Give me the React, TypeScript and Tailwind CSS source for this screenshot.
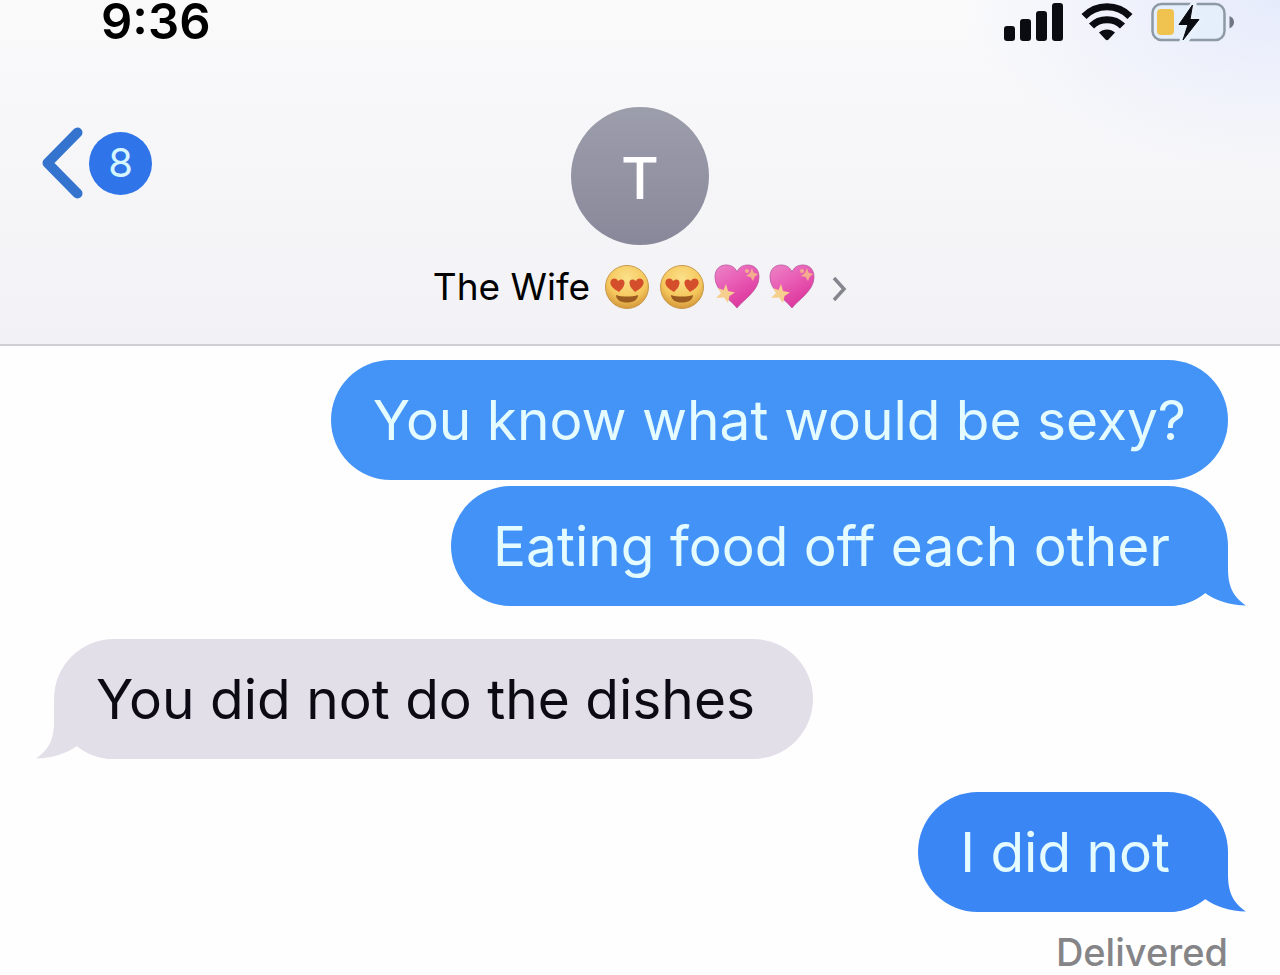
import { useId } from 'react'
import { clsx } from 'clsx'

type Message = {
  text: string
  from: 'me' | 'them'
  tail?: boolean
  bubble: string
  fill?: string
  gap: string
}

const messages: Message[] = [
  { text: 'You know what would be sexy?', from: 'me', bubble: 'bg-[#4493f6] text-[#e4fbff]', gap: 'mt-3.5' },
  { text: 'Eating food off each other', from: 'me', tail: true, bubble: 'bg-[#4292f7] text-[#e4fbff]', fill: 'fill-[#4292f7]', gap: 'mt-1.5' },
  { text: 'You did not do the dishes', from: 'them', tail: true, bubble: 'bg-[#e3dfe9] text-[#0c0b14]', fill: 'fill-[#e3dfe9]', gap: 'mt-[33px]' },
  { text: 'I did not', from: 'me', tail: true, bubble: 'bg-[#3b86f5] text-[#e4fbff]', fill: 'fill-[#3b86f5]', gap: 'mt-[33px]' },
]

function Signal() {
  return (
    <svg width="59" height="40" viewBox="0 0 59 40" fill="#0b0b12" aria-hidden="true">
      <rect x="0" y="24" width="11" height="15" rx="3" />
      <rect x="16" y="17" width="11" height="22" rx="3" />
      <rect x="32" y="9" width="11" height="30" rx="3" />
      <rect x="48" y="1" width="11" height="38" rx="3" />
    </svg>
  )
}

function Wifi() {
  return (
    <svg width="52" height="40" viewBox="0 0 52 40" aria-hidden="true">
      <g fill="none" stroke="#0b0b12" strokeWidth="7">
        <path d="M3 14.500C15.500 1.500 36.500 1.500 49 14.500" />
        <path d="M10.500 24C18.500 15.500 33.500 15.500 41.500 24" />
      </g>
      <path d="M18 30.500C22.500 26.500 29.500 26.500 34 30.500L27.500 37.500Q26 39 24.500 37.500Z" fill="#0b0b12" />
    </svg>
  )
}

function Battery() {
  return (
    <svg width="84" height="42" viewBox="0 0 84 42" aria-hidden="true">
      <rect x="1.500" y="3" width="72" height="36" rx="9" fill="#e4effb" stroke="#8d99a5" strokeWidth="2.500" />
      <rect x="6" y="8" width="17" height="26" rx="4" fill="#f0c350" />
      <path d="M41 0L24 24H32L28 42H37L53 16H44L46 0Z" fill="#e8f1fb" />
      <path d="M41.500 4L28 23.500H37L32 39L48 18.500H39Z" fill="#0b0b12" stroke="#0b0b12" strokeLinejoin="round" />
      <path d="M78.500 15Q83 17 83 21T78.500 27.500Z" fill="#6e7681" />
    </svg>
  )
}

function HeartEyes() {
  const id = useId()
  return (
    <svg width="46" height="46" viewBox="0 0 46 46" role="img" aria-label="Heart eyes">
      <defs>
        <radialGradient id={id} cx="50%" cy="30%" r="70%">
          <stop offset="0" stopColor="#fbe08a" />
          <stop offset="0.65" stopColor="#f5c75c" />
          <stop offset="1" stopColor="#d4973a" />
        </radialGradient>
      </defs>
      <circle cx="23" cy="23" r="21.500" fill={`url(#${id})`} stroke="#c99a4c" />
      <path d="M15 28C10 25 5.500 21.500 6.500 17.500C7.500 14 12 13.500 14 17C17 14 21 15.500 20.500 19.500C20 23 17.500 25.500 15 28Z" fill="#d44e2b" />
      <path d="M31 28C36 25 40.500 21.500 39.500 17.500C38.500 14 34 13.500 32 17C29 14 25 15.500 25.500 19.500C26 23 28.500 25.500 31 28Z" fill="#d44e2b" />
      <path d="M12 31C18 33 28 33 34 31C34 36 29 38.500 23 38.500S12 36 12 31Z" fill="#9a5a20" />
    </svg>
  )
}

function SparklingHeart() {
  const id = useId()
  return (
    <svg width="46" height="46" viewBox="0 0 46 46" role="img" aria-label="Sparkling heart">
      <defs>
        <linearGradient id={id} x1="0" y1="0" x2="0.6" y2="1">
          <stop offset="0" stopColor="#ec84c6" />
          <stop offset="0.5" stopColor="#e85bb4" />
          <stop offset="1" stopColor="#dc349b" />
        </linearGradient>
      </defs>
      <path
        d="M23 44C17 36 1 27 1 13C1 5 6 1 12 1C17 1 21 3 23 8C25 3 29 1 34 1C40 1 45 5 45 13C45 27 29 36 23 44Z"
        fill={`url(#${id})`}
        stroke="#b9559f"
        strokeWidth="0.800"
      />
      <path d="M12 20L14 27L21 28.500L15.500 32L14 39L10 33.500L2 34L7 29L4 24L9.500 26Z" fill="#f6cf8e" />
      <path d="M38 4L39.500 8.500L44 10L40.500 13L39 17L36.500 13L32 12L36 9Z" fill="#f3ad8e" />
      <circle cx="33" cy="7" r="2" fill="#f3ad8e" />
    </svg>
  )
}

// Fills the lower corner of a bubble and sweeps out to a point
function Tail({ from, fill }: { from: Message['from']; fill?: string }) {
  return (
    <svg
      width="78"
      height="60"
      viewBox="0 0 78 60"
      className={clsx('absolute bottom-0', from === 'me' ? '-right-[18px]' : '-left-[18px] -scale-x-100', fill)}
      aria-hidden="true"
    >
      <path d="M0 0H60V22C60 39 64 50 78 59.500C62 59 48 55 37 47C27 55 15 60 0 60Z" />
    </svg>
  )
}

function Bubble({ message }: { message: Message }) {
  const { text, from, tail, bubble, fill, gap } = message
  return (
    <li className={clsx('flex', gap, from === 'me' ? 'justify-end' : 'justify-start')}>
      <div
        className={clsx(
          'relative rounded-[60px] py-6 pl-[42px] text-[55px] leading-[72px]',
          tail ? 'pr-[58px]' : 'pr-[42px]',
          bubble,
        )}
      >
        {tail && <Tail from={from} fill={fill} />}
        <p className="relative">{text}</p>
      </div>
    </li>
  )
}

export default function App() {
  return (
    <main className="min-h-screen bg-[#fefefe] font-['Inter',sans-serif] text-black">
      <header className="border-b-2 border-[#d0ced3] bg-[radial-gradient(ellipse_320px_170px_at_top_right,#e6ebfc,transparent),linear-gradient(#fafafb,#f2f2f6)]">
        <div className="flex h-11 items-center justify-between pr-[45px] pl-[101px]">
          <time className="text-[49px] leading-11 font-semibold">9:36</time>
          <div className="flex items-center gap-[18px]">
            <Signal />
            <Wifi />
            <Battery />
          </div>
        </div>

        <div className="grid grid-cols-[1fr_auto_1fr] items-start pt-[63px] pb-[35px]">
          <button type="button" aria-label="Back, 8 unread" className="mt-5 ml-10 flex items-center gap-1.5 justify-self-start">
            <svg width="43" height="72" viewBox="0 0 43 72" fill="none" aria-hidden="true">
              <path d="M37.500 5.500L7.500 36L37.500 66.500" stroke="#3474cf" strokeWidth="10" strokeLinecap="round" strokeLinejoin="round" />
            </svg>
            <span className="flex size-[63px] items-center justify-center rounded-full bg-[#2f74e8] text-[40px] leading-none text-[#d5f5ff]">
              8
            </span>
          </button>

          <div className="flex flex-col items-center">
            <div className="flex size-[138px] items-center justify-center rounded-full bg-linear-to-b from-[#9d9eac] to-[#88889a] pt-1 text-[58px] font-medium text-white">
              T
            </div>
            <button type="button" className="mt-5 flex h-11 items-center text-[37px] leading-11">
              <span className="mr-3.5">The Wife</span>
              <span className="flex gap-[9px]">
                <HeartEyes />
                <HeartEyes />
                <SparklingHeart />
                <SparklingHeart />
              </span>
              <svg width="16" height="28" viewBox="0 0 16 28" fill="none" className="ml-4" aria-hidden="true">
                <path d="M3 5L13 16L3 27" stroke="#85858d" strokeWidth="3.500" />
              </svg>
            </button>
          </div>
        </div>
      </header>

      <ol className="pr-[52px] pl-[54px]">
        {messages.map((message) => (
          <Bubble key={message.text} message={message} />
        ))}
      </ol>
      <p className="mt-[18px] pr-[52px] text-right text-[38px] leading-11 font-medium text-[#858588]">Delivered</p>
    </main>
  )
}
